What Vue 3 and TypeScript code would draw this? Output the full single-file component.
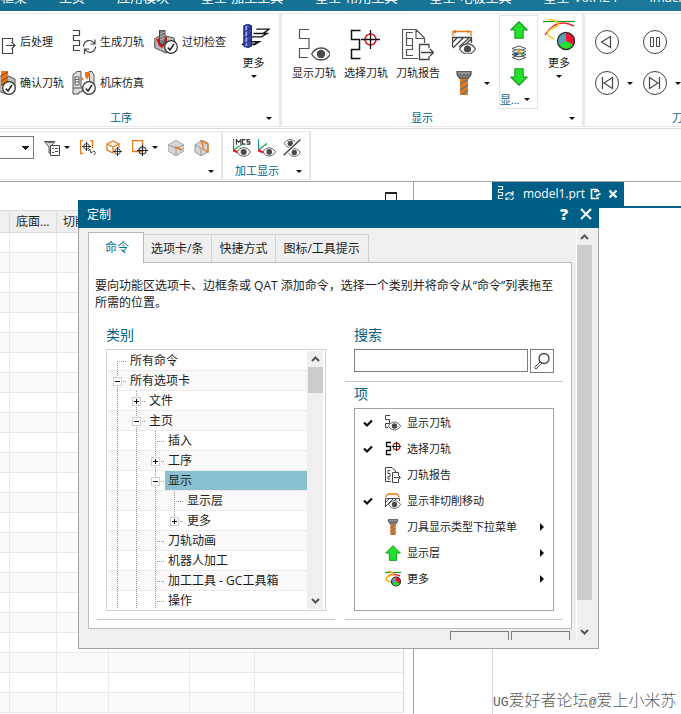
<script setup lang="ts">
import { ref } from 'vue'

interface TreeRow {
  label: string
  level: number
  node?: 'open' | 'closed'
  guides: string[]
  selected?: boolean
}

interface Item {
  label: string
  icon: string
  checked?: boolean
  more?: boolean
}

const menus = ['框架', '主页', '应用模块', '星空-加工工具', '星空-常用工具', '星空-电极工具', '星空-V6.F.24', 'imachining']

const operations = [
  { label: '后处理', icon: 'post' },
  { label: '生成刀轨', icon: 'generate' },
  { label: '过切检查', icon: 'gouge' },
  { label: '确认刀轨', icon: 'verify' },
  { label: '机床仿真', icon: 'machine' },
]

const displays = [
  { label: '显示刀轨', icon: 'path-eye' },
  { label: '选择刀轨', icon: 'path-pick' },
  { label: '刀轨报告', icon: 'report' },
]

const tabs = ['命令', '选项卡/条', '快捷方式', '图标/工具提示']
const activeTab = ref('命令')

const tree: TreeRow[] = [
  { label: '所有命令', level: 1, guides: ['start'] },
  { label: '所有选项卡', level: 1, node: 'open', guides: ['line'] },
  { label: '文件', level: 2, node: 'closed', guides: ['line', 'line'] },
  { label: '主页', level: 2, node: 'open', guides: ['line', 'line'] },
  { label: '插入', level: 3, guides: ['line', 'line', 'line'] },
  { label: '工序', level: 3, node: 'closed', guides: ['line', 'line', 'line'] },
  { label: '显示', level: 3, node: 'open', guides: ['line', 'line', 'line'], selected: true },
  { label: '显示层', level: 4, guides: ['line', 'line', 'line', 'line'] },
  { label: '更多', level: 4, node: 'closed', guides: ['line', 'line', 'line', 'end'] },
  { label: '刀轨动画', level: 3, guides: ['line', 'line', 'line'] },
  { label: '机器人加工', level: 3, guides: ['line', 'line', 'line'] },
  { label: '加工工具 - GC工具箱', level: 3, guides: ['line', 'line', 'line'] },
  { label: '操作', level: 3, guides: ['line', 'line', 'line'] },
]

const items: Item[] = [
  { label: '显示刀轨', icon: 's-path-eye', checked: true },
  { label: '选择刀轨', icon: 's-path-pick', checked: true },
  { label: '刀轨报告', icon: 's-report' },
  { label: '显示非切削移动', icon: 's-noncut', checked: true },
  { label: '刀具显示类型下拉菜单', icon: 'drill', more: true },
  { label: '显示层', icon: 'arrow-up', more: true },
  { label: '更多', icon: 's-curves', more: true },
]

const search = ref('')
const filter = ref('')
</script>

<template>
  <div class="app">
    <svg class="defs" aria-hidden="true">
      <symbol id="eye" viewBox="0 0 20 14">
        <path d="M.7 7C5-1 15-1 19.300 7C15 15 5 15 .7 7Z" fill="#fff" stroke="#4a4a4a" stroke-width="1.300" />
        <circle cx="10" cy="7" r="4.200" fill="#4a4a4a" />
      </symbol>
      <symbol id="tick" viewBox="0 0 14 14">
        <circle cx="7" cy="7" r="6.300" fill="#fff" stroke="#333" stroke-width="1.200" />
        <path d="M3.800 7.500L6 10L10 4" fill="none" stroke="#222" stroke-width="1.400" />
      </symbol>
      <symbol id="post" viewBox="0 0 24 24">
        <path d="M20.500 12V8.500H10.500V23.500H20.500V19M14 15.500H23M19.500 12L23 15.500L19.500 19" fill="none" stroke="#444" stroke-width="1.200" />
      </symbol>
      <symbol id="generate" viewBox="0 0 24 24">
        <path d="M1 .5H7.500V5.500H1.500V10.500H7.500V15.500H1.500V20.500H8" fill="none" stroke="#444" stroke-width="1.200" />
        <path d="M11.500 16.500C12 10 19 8.500 22.500 13.500M23 9.500V14H18.500M23.500 16.500C23 23 16 24 13 19.500M12.500 24V19H17" fill="none" stroke="#444" stroke-width="1.200" />
      </symbol>
      <symbol id="gouge" viewBox="0 0 24 24">
        <path d="M0 9L7 5L20 8L22 17L12 23L1 18Z" fill="#bbb" stroke="#555" />
        <path d="M2 9L13 7V13L8 18L5 16Z" fill="#d0141c" />
        <path d="M1 10V18L12 23V13" fill="none" stroke="#777" />
        <path d="M5.500 0H11V13L8 15L5.500 13Z" fill="#777" stroke="#444" />
        <path d="M6 4L11 2M6 7L11 5M6 10L11 8" stroke="#bbb" />
        <use href="#tick" x="10" y="10" width="14" height="14" />
      </symbol>
      <symbol id="verify" viewBox="0 0 24 24">
        <path d="M4 8L12 3L23 8V18L14 23L4 19Z" fill="#bbb" stroke="#555" />
        <path d="M9 0H16V14L12 16L9 14Z" fill="#e87817" />
        <path d="M9 5L16 1M9 10L16 6M9 14L16 10" stroke="#a64c08" stroke-width="1.200" />
        <use href="#tick" x="10" y="10" width="14" height="14" />
      </symbol>
      <symbol id="machine" viewBox="0 0 24 24">
        <path d="M1 4L5 .5H9V16H13V19H10V21H7V23H1Z" fill="#ddd" stroke="#555" />
        <path d="M17 .5H20L22 4V14H18Z" fill="#ddd" stroke="#555" />
        <path d="M3 6H7V14H3ZM3 8.500H7M3 11H7M1 17H11" fill="#fff" stroke="#555" />
        <path d="M9 6L12 8L9 10ZM13 1H17V5L15 9L13 5Z" fill="#e87817" />
        <use href="#tick" x="10" y="10" width="14" height="14" />
      </symbol>
      <symbol id="mill" viewBox="-2 -2 33 33">
        <path d="M17 8.500H30L24 13H14M30 8.500L23 13.500M14 13H28L22 16.500H12M12 21.500H18L15 24H2M12 21.500H20L14 25" fill="none" stroke="#111" stroke-width="1.400" />
        <path d="M4 5Q8 2 12 5V26Q8 29 4 26Z" fill="#3542a8" stroke="#1a2068" />
        <path d="M6.500 5V26" stroke="#96a0e8" stroke-width="2" />
        <path d="M4 12L12 7M4 18L12 13M4 24L12 19" stroke="#171d6b" />
      </symbol>
      <symbol id="path-eye" viewBox="0 0 32 32">
        <path d="M11 .5H1.500V9.500H11V19.500H1.500V28.500H10" fill="none" stroke="#555" stroke-width="1.200" />
        <use href="#eye" x="13" y="18" width="20" height="14" />
      </symbol>
      <symbol id="path-pick" viewBox="0 0 32 32">
        <path d="M10.500 1.500H1.500V10.500H9.500V20.500H1.500V29.500H10.500" fill="none" stroke="#111" stroke-width="1.500" />
        <circle cx="20.500" cy="10.500" r="5.500" fill="none" stroke="#e01b24" stroke-width="1.500" />
        <path d="M20.500 1V20M11 10.500H30" stroke="#111" stroke-width="1.300" />
      </symbol>
      <symbol id="report" viewBox="0 0 32 32">
        <path d="M16 29.500H.5V.5H14L22.500 9V14M14 1V9.500H22M11 3.500H4.500V9.500H10.500V16.500H4.500V9.500M10.500 16.500V20.500H4.500V26.500H11" fill="none" stroke="#555" stroke-width="1.200" />
        <path d="M27 19V15.500H17.500V30.500H27V27M19 23.500H31M28 20L31.500 23.500L28 27" fill="none" stroke="#444" stroke-width="1.300" />
      </symbol>
      <symbol id="noncut" viewBox="0 0 24 24">
        <path d="M.5 17V7.500H19.500V13M1 12L5 8M1 18L11 8M7 17L17 8M14 14L19 9" fill="none" stroke="#444" stroke-width="1.300" />
        <path d="M1 6V1.500H19V6M16 0V3M4 0L1.500 1.500L4 3" fill="none" stroke="#e87817" stroke-width="1.300" />
        <use href="#eye" x="7" y="13" width="17" height="12" />
      </symbol>
      <symbol id="drill" viewBox="0 0 24 24">
        <path d="M5 0H19V4L16 8H8L5 4Z" fill="#777" stroke="#444" />
        <path d="M8 8H16V24H8Z" fill="#e87817" />
        <path d="M8 13L16 8.500M8 19L16 14M9 24L16 19.500" stroke="#777" stroke-width="1.800" />
        <path d="M6 2H18" stroke="#aaa" />
      </symbol>
      <symbol id="arrow-up" viewBox="0 0 24 24">
        <path d="M12 1L23 12H17.500V23H6.500V12H1Z" fill="#22e02c" stroke="#169a1c" stroke-width="1.500" stroke-linejoin="round" />
      </symbol>
      <symbol id="layers" viewBox="0 0 16 16">
        <path d="M1 3.500L8 1L15 3.500L8 6ZM1 12.500L8 10L15 12.500L8 15Z" fill="#fff" stroke="#555" />
        <path d="M1 9.500L8 7L15 9.500L8 12Z" fill="#dfe9d8" stroke="#444" />
        <path d="M1 6.500L8 4L15 6.500L8 9Z" fill="#fff" stroke="#666" />
        <path d="M3 9L6 7L8 9L5 11Z" fill="#2b50a8" />
        <path d="M9 8L13 7L11 11Z" fill="#2da34a" />
        <circle cx="8" cy="6.500" r="1.800" fill="#f39c12" />
      </symbol>
      <symbol id="curves" viewBox="0 0 32 32">
        <path d="M0 2.500H32" stroke="#0f9a1e" stroke-width="1.200" />
        <path d="M2 16Q13-2 31 7" fill="none" stroke="#e8253b" stroke-width="1.400" />
        <path d="M5 0C16 2 19 6 10 9C3 12 2 16 11 20" fill="none" stroke="#f7c51e" stroke-width="1.500" />
        <circle cx="23" cy="22" r="8.500" fill="#5a9fb8" />
        <path d="M23 22V13.500A8.500 8.500 0 0 1 30.400 26.200Z" fill="#fa1433" />
        <path d="M23 22L30.400 26.200A8.500 8.500 0 0 1 15.600 26.200Z" fill="#22e02c" />
        <circle cx="23" cy="22" r="8.500" fill="none" stroke="#333" stroke-width="1.400" />
      </symbol>
      <symbol id="s-curves" viewBox="0 0 16 16">
        <path d="M0 1.500H16" stroke="#0f9a1e" stroke-width="1.200" />
        <path d="M3 5Q9 2 15 5" fill="none" stroke="#e8253b" stroke-width="1.400" />
        <path d="M3 .5Q9 1 8 4Q1 5 1 8.500Q3 11 7 11" fill="none" stroke="#f5b11e" stroke-width="1.500" />
        <circle cx="11" cy="10.500" r="4.500" fill="#5a9fb8" />
        <path d="M11 10.500V6A4.500 4.500 0 0 1 14.900 12.700Z" fill="#fa1433" />
        <path d="M11 10.500L14.900 12.700A4.500 4.500 0 0 1 7.100 12.700Z" fill="#22e02c" />
        <circle cx="11" cy="10.500" r="4.500" fill="none" stroke="#333" stroke-width="1.200" />
      </symbol>
      <symbol id="play-back" viewBox="0 0 24 24">
        <circle cx="12" cy="12" r="11.500" fill="#fff" stroke="#444" />
        <path d="M15.500 6.500V17.500L6.500 12Z" fill="none" stroke="#444" stroke-width="1.200" />
      </symbol>
      <symbol id="pause" viewBox="0 0 24 24">
        <circle cx="12" cy="12" r="11.500" fill="#fff" stroke="#444" />
        <path d="M7.500 7.500H10.500V16.500H7.500ZM13.500 7.500H16.500V16.500H13.500Z" fill="none" stroke="#444" />
      </symbol>
      <symbol id="first" viewBox="0 0 24 24">
        <circle cx="12" cy="12" r="11.500" fill="#fff" stroke="#444" />
        <path d="M17.500 6.500V17.500L9 12ZM7.500 6V18" fill="none" stroke="#444" stroke-width="1.200" />
      </symbol>
      <symbol id="last" viewBox="0 0 24 24">
        <circle cx="12" cy="12" r="11.500" fill="#fff" stroke="#444" />
        <path d="M6.500 6.500V17.500L15 12ZM16.500 6V18" fill="none" stroke="#444" stroke-width="1.200" />
      </symbol>
      <symbol id="funnel" viewBox="0 0 16 16">
        <path d="M.5 1.500H11L8 5V13H5V7ZM.5 1.500Q6 4 11 1.500" fill="#ddd" stroke="#555" />
        <path d="M6.500 5.500H15.500V15.500H6.500Z" fill="#fff" stroke="#444" />
        <path d="M8 8.500H10M8 12.500H10M11 8.500H14M11 11.500H14" stroke="#444" />
      </symbol>
      <symbol id="target" viewBox="0 0 10 10">
        <circle cx="5" cy="5" r="3.200" fill="none" stroke="#333" />
        <path d="M5 0V10M0 5H10" stroke="#222" />
      </symbol>
      <symbol id="bracket" viewBox="0 0 16 16">
        <path d="M3 .5H.5V13.500H3M10 .5H12.500V8" fill="none" stroke="#e87817" stroke-width="1.300" />
        <use href="#target" x="2" y="2" width="9" height="9" />
        <path d="M8 11L10 9L11 13L14 11Q17 12 14 15" fill="none" stroke="#444" />
      </symbol>
      <symbol id="cube-pick" viewBox="0 0 16 16">
        <path d="M1 4L7 1L13 4V10L7 13L1 10ZM1 4L7 7L13 4M7 7V13" fill="none" stroke="#e87817" stroke-width="1.300" />
        <circle cx="11.500" cy="11.500" r="4" fill="#fff" />
        <use href="#target" x="7" y="7" width="9" height="9" />
      </symbol>
      <symbol id="rect-pick" viewBox="0 0 16 16">
        <path d="M.5.5H10.500V11.500H.5Z" fill="none" stroke="#e87817" stroke-width="1.300" />
        <use href="#target" x="5" y="5" width="11" height="11" />
      </symbol>
      <symbol id="cube-edge" viewBox="0 0 16 16">
        <path d="M0 5L8 0L16 5V11L8 16L0 11Z" fill="#d5d5d5" stroke="#aaa" />
        <path d="M0 5L8 8V16M8 8L16 5" fill="none" stroke="#999" />
        <path d="M7 7L14 10" stroke="#e87817" stroke-width="1.600" />
      </symbol>
      <symbol id="cube-face" viewBox="0 0 16 16">
        <path d="M1 5L8 0L14 3V12L7 16L1 12Z" fill="#d5d5d5" stroke="#999" />
        <path d="M1 5L7 8V16" fill="none" stroke="#999" />
        <path d="M7 1L14 4V12L9 9V5L7 1Z" fill="none" stroke="#e87817" stroke-width="1.300" />
      </symbol>
      <symbol id="mcs" viewBox="0 0 16 16">
        <path d="M.5 0V10" stroke="#1890a8" /><path d="M0 10L8 5" stroke="#18a030" /><path d="M0 10L5 12" stroke="#e01b24" stroke-width="2" />
        <path d="M3 5V.5L5 3L7 .5V5M11 .5H8.500V4.500H11M15 .5H12.500V2.500H15V4.500H12" fill="none" stroke="#333" />
        <use href="#eye" x="3" y="7" width="13" height="9" />
      </symbol>
      <symbol id="axis-eye" viewBox="0 0 16 16">
        <path d="M.5 0V10" stroke="#1890a8" /><path d="M0 10L8 4" stroke="#18a030" /><path d="M0 10L5 12" stroke="#e01b24" stroke-width="2" />
        <use href="#eye" x="4" y="7" width="12" height="9" />
      </symbol>
      <symbol id="eye-off" viewBox="0 0 16 16">
        <use href="#eye" x="0" y="0" width="13" height="8" />
        <use href="#eye" x="4" y="8" width="12" height="8" />
        <path d="M15 1L1 14" stroke="#fff" stroke-width="3" />
        <path d="M15.500.5L.5 14.500" stroke="#444" stroke-width="1.300" />
      </symbol>
      <symbol id="s-path-eye" viewBox="0 0 16 16">
        <path d="M5 .5H.5V4.500H4.500V8.500H.5V12.500H3" fill="none" stroke="#444" />
        <use href="#eye" x="3" y="6" width="13" height="10" />
      </symbol>
      <symbol id="s-path-pick" viewBox="0 0 16 16">
        <path d="M6 1.500H1.500V5.500H5.500V9.500H1.500V13.500H6" fill="none" stroke="#111" stroke-width="1.300" />
        <circle cx="11.500" cy="5.500" r="3.300" fill="none" stroke="#d01018" stroke-width="1.200" />
        <path d="M11.500 1V10M7 5.500H16" stroke="#111" />
      </symbol>
      <symbol id="s-report" viewBox="0 0 16 16">
        <path d="M6 14.500H.5V.5H7L10.500 4V5M5 3.500H3V6.500H5V9.500H3V12H5" fill="none" stroke="#444" />
        <path d="M13.500 8V5.500H7.500V15.500H13.500V13M9 10.500H15.500M13 8L15.500 10.500L13 13" fill="none" stroke="#444" />
      </symbol>
      <symbol id="s-noncut" viewBox="0 0 16 16">
        <path d="M.5 14V5.500H14.500V8M1 9L4 6M1 13L8 6M9 8L11 6" fill="none" stroke="#444" />
        <path d="M.5 4L3 1H12L14.500 4" fill="none" stroke="#e87817" stroke-width="1.300" />
        <use href="#eye" x="3" y="7" width="13" height="9" />
      </symbol>
    </svg>

    <nav class="menu">
      <a v-for="m in menus" :key="m" href="#">{{ m }}</a>
    </nav>

    <div class="ribbon">
      <section class="group ops">
        <div class="group-body">
          <div class="op-grid">
            <button v-for="o in operations" :key="o.label" class="op" type="button">
              <svg class="i24"><use :href="'#' + o.icon" /></svg>{{ o.label }}
            </button>
          </div>
          <button class="large more" type="button">
            <svg class="i32"><use href="#mill" /></svg>更多<i class="caret"></i>
          </button>
        </div>
        <footer class="group-foot"><span>工序</span><button type="button" aria-label="工序选项"><i class="caret"></i></button></footer>
      </section>

      <section class="group view">
        <div class="group-body">
          <button v-for="d in displays" :key="d.label" class="large" type="button">
            <svg class="i32"><use :href="'#' + d.icon" /></svg>{{ d.label }}
          </button>
          <div class="stack">
            <button type="button" aria-label="显示非切削移动"><svg class="i24"><use href="#noncut" /></svg></button>
            <button type="button" aria-label="刀具显示类型"><svg class="i24"><use href="#drill" /></svg><i class="caret"></i></button>
          </div>
          <div class="gallery">
            <button type="button" aria-label="上一层"><svg class="i18"><use href="#arrow-up" /></svg></button>
            <button type="button" aria-label="层"><svg class="i16"><use href="#layers" /></svg></button>
            <button type="button" aria-label="下一层"><svg class="i18 flip"><use href="#arrow-up" /></svg></button>
            <button class="gallery-label" type="button"><span>显...</span><i class="caret"></i></button>
          </div>
          <button class="large more" type="button">
            <svg class="i32"><use href="#curves" /></svg>更多<i class="caret"></i>
          </button>
        </div>
        <footer class="group-foot"><span>显示</span><button type="button" aria-label="显示选项"><i class="caret"></i></button></footer>
      </section>

      <section class="group play">
        <div class="group-body play-grid">
          <button type="button" aria-label="后退"><svg class="i24"><use href="#play-back" /></svg></button>
          <button type="button" aria-label="暂停"><svg class="i24"><use href="#pause" /></svg></button>
          <button type="button" aria-label="第一步"><svg class="i24"><use href="#first" /></svg><i class="caret"></i></button>
          <button type="button" aria-label="最后一步"><svg class="i24"><use href="#last" /></svg><i class="caret"></i></button>
        </div>
        <footer class="group-foot"><span>刀轨动画</span></footer>
      </section>
    </div>

    <div class="tools">
      <section class="tool-group select-group">
        <div class="tool-row">
          <select v-model="filter" class="filter" aria-label="选择过滤器"><option value=""></option></select>
          <button type="button" aria-label="过滤"><svg class="i16"><use href="#funnel" /></svg><i class="caret"></i></button>
          <button type="button" aria-label="选择范围"><svg class="i16"><use href="#bracket" /></svg></button>
          <button type="button" aria-label="选择体"><svg class="i16"><use href="#cube-pick" /></svg></button>
          <button type="button" aria-label="矩形选择"><svg class="i16"><use href="#rect-pick" /></svg><i class="caret"></i></button>
          <button type="button" aria-label="边"><svg class="i16"><use href="#cube-edge" /></svg></button>
          <button type="button" aria-label="面"><svg class="i16"><use href="#cube-face" /></svg></button>
        </div>
        <footer class="group-foot"><span></span><button type="button" aria-label="选择选项"><i class="caret"></i></button></footer>
      </section>
      <section class="tool-group cam-group">
        <div class="tool-row">
          <button type="button" aria-label="显示 MCS"><svg class="i18"><use href="#mcs" /></svg></button>
          <button type="button" aria-label="显示坐标系"><svg class="i18"><use href="#axis-eye" /></svg></button>
          <button type="button" aria-label="隐藏"><svg class="i18"><use href="#eye-off" /></svg></button>
        </div>
        <footer class="group-foot"><span>加工显示</span><button type="button" aria-label="加工显示选项"><i class="caret"></i></button></footer>
      </section>
    </div>

    <main class="workspace">
      <section class="navigator">
        <header class="nav-head"><button class="maximize" type="button" aria-label="最大化"></button></header>
        <table class="grid">
          <colgroup><col class="c1" /><col class="c2" /><col class="c3" /><col class="c4" /><col class="c5" /><col /></colgroup>
          <thead><tr><th></th><th>底面...</th><th>切削</th><th></th><th></th><th></th></tr></thead>
          <tbody><tr v-for="r in 24" :key="r"><td v-for="c in 6" :key="c"></td></tr></tbody>
        </table>
      </section>
      <section class="viewport">
        <header class="file-bar">
          <div class="file-tab">
            <svg class="i18" viewBox="0 0 18 18"><path d="M1 1.500H5.500V4.500H1.500V7.500H5.500V10.500H1.500V13.500H6M8.500 11C9 7.500 14 6.500 16 9.500M16 6V10H12.500M16.500 12C16 15.500 11 16.500 9 13.500M9 17V13H12.500" fill="none" stroke="#e4eef3" stroke-width="1.200" /></svg>
            <span>model1.prt</span>
            <svg class="i12" viewBox="0 0 12 12"><path d="M8 9V10.500H1.500V1.500H7L9 4M4 3.500H7M6 8L10.500 5.500" fill="none" stroke="#fff" stroke-width="1.600" /></svg>
            <button type="button" aria-label="关闭 model1.prt"><svg class="i12" viewBox="0 0 12 12"><path d="M2.500 2.500L9.500 9.500M9.500 2.500L2.500 9.500" stroke="#fff" stroke-width="2.200" /></svg></button>
          </div>
        </header>
        <div class="canvas">
          <p class="watermark"><span>UG</span>爱好者论坛<span>@</span>爱上小米苏</p>
        </div>
      </section>
    </main>

    <div class="dialog" role="dialog" aria-labelledby="dialog-title">
      <header class="title-bar">
        <h1 id="dialog-title">定制</h1>
        <button type="button" aria-label="帮助" class="help">?</button>
        <button type="button" aria-label="关闭"><svg class="i12" viewBox="0 0 12 12"><path d="M1 1L11 11M11 1L1 11" stroke="#fff" stroke-width="2" /></svg></button>
      </header>
      <div class="dialog-body">
        <div class="dialog-main">
          <div class="tabs" role="tablist">
            <button v-for="t in tabs" :key="t" type="button" role="tab" :aria-selected="t === activeTab" :class="{ active: t === activeTab }" @click="activeTab = t">{{ t }}</button>
          </div>
          <div class="panel">
            <p class="intro">要向功能区选项卡、边框条或 QAT 添加命令，选择一个类别并将命令从“命令”列表拖至所需的位置。</p>
            <div class="columns">
              <section class="col categories">
                <h2>类别</h2>
                <div class="tree-box">
                  <ul class="tree" role="tree">
                    <li v-for="row in tree" :key="row.label + row.level" role="treeitem" :aria-level="row.level" :class="{ selected: row.selected }">
                      <span v-for="(g, i) in row.guides" :key="i" class="guide" :class="[g, { branch: i === row.level - 1 }]">
                        <button v-if="row.node && i === row.level - 1" type="button" class="node" :class="row.node" :aria-label="row.label"></button>
                      </span>
                      <span class="tree-label">{{ row.label }}</span>
                    </li>
                  </ul>
                  <div class="scroll">
                    <svg class="chev" viewBox="0 0 15 15"><path d="M4 9.500L7.500 6L11 9.500" /></svg>
                    <i class="thumb short"></i>
                    <svg class="chev" viewBox="0 0 15 15"><path d="M4 5.500L7.500 9L11 5.500" /></svg>
                  </div>
                </div>
              </section>
              <section class="col commands">
                <div class="search-block">
                  <h2><label for="search">搜索</label></h2>
                  <div class="search-row">
                    <input id="search" v-model="search" type="text" />
                    <button type="button" aria-label="搜索"><svg class="i18" viewBox="0 0 18 18"><circle cx="11" cy="6.500" r="5" fill="#fff" stroke="#444" stroke-width="1.300" /><path d="M7.500 9.500L1.500 15.500L3 17L9 11" fill="none" stroke="#444" /></svg></button>
                  </div>
                </div>
                <div class="item-block">
                  <h2>项</h2>
                  <ul class="items">
                    <li v-for="it in items" :key="it.label">
                      <span class="check"><svg v-if="it.checked" class="i10" viewBox="0 0 10 10"><path d="M1 4.500L4 7.500L9 2.500" fill="none" stroke="#111" stroke-width="2.200" /></svg></span>
                      <svg class="i16"><use :href="'#' + it.icon" /></svg>
                      <span class="item-label">{{ it.label }}</span>
                      <i v-if="it.more" class="arrow"></i>
                    </li>
                  </ul>
                </div>
              </section>
            </div>
          </div>
          <div class="dialog-actions"><button type="button" aria-label="键盘"></button><button type="button" aria-label="关闭对话框"></button></div>
        </div>
        <div class="scroll outer">
          <svg class="chev" viewBox="0 0 15 15"><path d="M4 9.500L7.500 6L11 9.500" /></svg>
          <i class="thumb long"></i>
          <svg class="chev" viewBox="0 0 15 15"><path d="M4 5.500L7.500 9L11 5.500" /></svg>
        </div>
      </div>
    </div>
  </div>
</template>

<style>
body {
  margin: 0;
  overflow: hidden;
}
</style>

<style scoped>
.app {
  position: relative;
  display: flex;
  flex-direction: column;
  height: 100vh;
  overflow: hidden;
  background: #fff;
  color: #1c1c1c;
  font: 11px/16px "Open Sans", "Noto Sans CJK SC", sans-serif;
}
.app * {
  box-sizing: border-box;
}
.defs {
  position: absolute;
  width: 0;
  height: 0;
}
button {
  display: flex;
  align-items: center;
  padding: 0;
  border: 0;
  background: none;
  color: inherit;
  font: inherit;
  white-space: nowrap;
}
h1, h2, p, ul {
  margin: 0;
  padding: 0;
  font-weight: normal;
  list-style: none;
}
svg {
  display: block;
  flex: none;
}
.i10 { width: 10px; height: 10px; }
.i12 { width: 12px; height: 12px; }
.i16 { width: 16px; height: 16px; }
.i18 { width: 18px; height: 18px; }
.i24 { width: 24px; height: 24px; }
.i32 { width: 32px; height: 32px; }
.flip {
  transform: rotate(180deg);
}
.caret {
  flex: none;
  border: 3px solid transparent;
  border-top-color: #111;
  border-bottom: 0;
}

.menu {
  display: flex;
  flex: none;
  align-items: flex-end;
  gap: 32px;
  height: 11px;
  padding: 0 0 4px 1px;
  overflow: hidden;
  background: linear-gradient(90deg, #126e91, #1b7899);
}
.menu a {
  flex: none;
  color: #fff;
  font-size: 13px;
  line-height: 20px;
  text-decoration: none;
}

.ribbon {
  display: flex;
  flex: none;
  height: 118px;
  padding-top: 2px;
  border-bottom: 1px solid #d9d9d9;
  overflow: hidden;
}
.group {
  display: flex;
  flex: none;
  flex-direction: column;
  height: 114px;
  border: solid #e8e8e8;
  border-width: 1px 2px 1px 1px;
}
.ops {
  width: 299px;
  margin-left: -18px;
}
.view {
  width: 303px;
}
.play {
  flex: 1 0 150px;
}
.group-body {
  display: flex;
  flex: 1;
}
.group-foot {
  display: flex;
  flex: none;
  align-items: center;
  height: 16px;
  color: #00628b;
}
.group-foot span {
  flex: 1;
  text-align: center;
}
.group-foot button {
  justify-content: center;
  width: 20px;
  height: 16px;
}
.op-grid {
  display: grid;
  grid-template-columns: 80px 82px 74px;
  grid-auto-rows: 24px;
  row-gap: 17px;
  padding: 16px 0 0 9px;
}
.op {
  gap: 4px;
}
.large {
  flex-direction: column;
  width: 52px;
  padding-top: 15px;
  gap: 4px;
}
.large.more {
  width: 42px;
  padding-top: 5px;
  gap: 4px;
}
.ops .more {
  width: 60px;
}
.view .group-body {
  padding-left: 6px;
}
.stack {
  display: grid;
  grid-auto-rows: 24px;
  row-gap: 17px;
  width: 55px;
  padding: 16px 0 0 8px;
}
.stack button {
  gap: 8px;
}
.gallery {
  display: flex;
  flex-direction: column;
  align-items: center;
  justify-content: space-between;
  width: 39px;
  height: 94px;
  margin-top: 1px;
  padding-top: 5px;
  border: 1px solid #e2e2e2;
}
.gallery-label {
  align-self: stretch;
  gap: 4px;
  color: #00628b;
}
.play-grid {
  display: grid;
  grid-template-columns: 48px 48px;
  grid-auto-rows: 24px;
  row-gap: 17px;
  padding: 16px 0 0 10px;
}
.play-grid button {
  gap: 8px;
}
.play .group-foot span {
  padding-left: 87px;
  text-align: left;
}

.tools {
  display: flex;
  flex: none;
  height: 53px;
  padding-top: 2px;
  border-bottom: 1px solid #a3a3a3;
}
.tool-group {
  display: flex;
  flex-direction: column;
  justify-content: space-between;
  height: 49px;
  border: solid #e6e6e6;
  border-width: 1px 2px 1px 0;
}
.select-group {
  width: 223px;
}
.cam-group {
  width: 88px;
}
.tool-row {
  display: flex;
  align-items: center;
  gap: 10px;
  height: 32px;
}
.tool-row button {
  gap: 4px;
}
.cam-group .tool-row {
  gap: 7px;
  padding-left: 10px;
}
.cam-group .group-foot span {
  padding-left: 2px;
}
.filter {
  width: 34px;
  height: 23px;
  border: 1px solid #7d7d7d;
  border-left: 0;
  border-radius: 0;
  background: linear-gradient(#111, #111) 22px 9px / 7px 1px no-repeat, linear-gradient(#111, #111) 23px 10px / 5px 1px no-repeat, linear-gradient(#111, #111) 24px 11px / 3px 1px no-repeat, linear-gradient(#111, #111) 25px 12px / 1px 1px no-repeat, #fff;
  appearance: none;
}

.workspace {
  display: flex;
  flex: 1;
  min-height: 0;
}
.navigator {
  flex: none;
  width: 414px;
  padding-right: 9px;
  border-right: 1px solid #a3a3a3;
  overflow: hidden;
}
.nav-head {
  display: flex;
  justify-content: flex-end;
  height: 28px;
  padding: 10px 7px 0 0;
}
.maximize {
  width: 12px;
  height: 11px;
  border: 1px solid #222;
  border-top-width: 2px;
}
.grid {
  width: 100%;
  border-collapse: separate;
  border-spacing: 0;
  border-right: 1px solid #d9d9d9;
  table-layout: fixed;
}
.c1 { width: 10px; }
.c2 { width: 47px; }
.c3 { width: 52px; }
.c4 { width: 81px; }
.c5 { width: 65px; }
.grid th {
  height: 23px;
  padding: 0 0 0 6px;
  border: solid #dcdcdc;
  border-width: 1px 1px 1px 0;
  background: #efefef;
  font-size: 12px;
  font-weight: normal;
  text-align: left;
  white-space: nowrap;
  overflow: hidden;
}
.grid td {
  height: 20px;
  padding: 0;
  border: solid #e9e9e9;
  border-width: 0 1px 1px 0;
}
.grid td:last-child,
.grid th:last-child {
  border-right: 0;
}
.grid tbody tr:nth-child(even) {
  background: #fafafa;
}
.viewport {
  display: flex;
  flex: 1;
  flex-direction: column;
  min-width: 0;
  padding-left: 78px;
}
.file-bar {
  display: flex;
  flex: none;
  height: 26px;
  border-bottom: 2px solid #005f87;
}
.file-tab {
  display: flex;
  align-items: center;
  gap: 5px;
  padding: 0 5px;
  background: #005f87;
  color: #fff;
  font-size: 12px;
}
.file-tab .i18 {
  margin-right: 3px;
}
.canvas {
  display: flex;
  flex: 1;
  align-items: flex-end;
  border-left: 1px solid #d9d9d9;
}
.watermark {
  color: #5c5c5c;
  font: 300 16px/22px "Noto Sans CJK SC", sans-serif;
  white-space: nowrap;
}
.watermark span {
  font: 13px/22px "Liberation Mono", monospace;
}

.dialog {
  position: absolute;
  top: 200px;
  left: 78px;
  width: 521px;
  border: 1px solid #a3a3a3;
  border-top: 0;
  background: #efefef;
  font-size: 12px;
}
.title-bar {
  display: flex;
  align-items: center;
  gap: 12px;
  height: 28px;
  margin: 0 -1px;
  padding: 0 7px 0 9px;
  background: #005f87;
  color: #fff;
}
.title-bar h1 {
  flex: 1;
  padding-top: 2px;
  font-size: 12px;
}
.help {
  font-size: 16px;
  font-weight: 800;
}
.dialog-body {
  display: flex;
  padding: 4px 6px 8px 9px;
}
.dialog-main {
  flex: 1;
  min-width: 0;
}
.tabs {
  display: flex;
  align-items: flex-start;
  height: 30px;
}
.tabs button {
  height: 28px;
  margin: 2px 0 0 -1px;
  padding: 0 8px 0 7px;
  border: 1px solid #d2d2d2;
  border-bottom: 0;
}
.tabs button.active {
  position: relative;
  height: 31px;
  margin: 0;
  padding: 0 14px 0 16px;
  border-color: #b9b9b9;
  background: #fff;
  color: #00718f;
}
.panel {
  margin-right: 4px;
  padding: 14px 8px 8px;
  border: 1px solid #bdbdbd;
  background: #fff;
}
.intro {
  margin: 0 -2px;
  padding-bottom: 14px;
  line-height: 17px;
}
.columns {
  display: grid;
  grid-template-columns: 238fr 218fr;
  gap: 10px;
}
.col {
  display: flex;
  flex-direction: column;
}
.col h2 {
  height: 24px;
  color: #00628b;
  font-size: 14px;
  line-height: 20px;
}
.categories {
  padding: 0 9px 8px;
  border-bottom: 1px solid #c6c6c6;
}
.tree-box {
  display: flex;
  height: 262px;
  padding: 1px 2px 1px 1px;
  border: 1px solid #d0d0d0;
}
.tree {
  flex: 1;
  min-width: 0;
  overflow: hidden;
}
.tree li {
  display: flex;
  height: 20px;
  border-bottom: 1px solid #ececec;
}
.tree li:nth-child(even) {
  background: #f9f9f9;
}
.guide {
  display: flex;
  flex: none;
  align-items: center;
  justify-content: center;
  width: 19px;
  height: 20px;
  background: repeating-linear-gradient(#999 0 1px, transparent 1px 2px) 9px 0 / 1px 100% no-repeat;
}
.guide.branch {
  background: repeating-linear-gradient(#999 0 1px, transparent 1px 2px) 9px 0 / 1px 100% no-repeat, repeating-linear-gradient(90deg, #999 0 1px, transparent 1px 2px) 9px 10px / 9px 1px no-repeat;
}
.guide.start {
  background: repeating-linear-gradient(#999 0 1px, transparent 1px 2px) 9px 10px / 1px 10px no-repeat, repeating-linear-gradient(90deg, #999 0 1px, transparent 1px 2px) 9px 10px / 9px 1px no-repeat;
}
.guide.end {
  background: repeating-linear-gradient(#999 0 1px, transparent 1px 2px) 9px 0 / 1px 10px no-repeat, repeating-linear-gradient(90deg, #999 0 1px, transparent 1px 2px) 9px 10px / 9px 1px no-repeat;
}
.node {
  width: 9px;
  height: 9px;
  border: 1px solid #d0d0d0;
  background: linear-gradient(#111, #111) center / 5px 1px no-repeat, #fff;
}
.node.closed {
  background: linear-gradient(#111, #111) center / 5px 1px no-repeat, linear-gradient(#111, #111) center / 1px 5px no-repeat, #fff;
}
.tree-label {
  flex: 1;
  padding-left: 3px;
  line-height: 19px;
  white-space: nowrap;
}
.selected .tree-label {
  background: #8ac1d1;
}
.scroll {
  display: flex;
  flex: none;
  flex-direction: column;
  align-items: center;
  justify-content: space-between;
  width: 16px;
  background: #efefef;
}
.chev {
  width: 15px;
  height: 16px;
  fill: none;
  stroke: #555;
  stroke-width: 2;
}
.thumb {
  width: 15px;
  background: #cbcbcb;
}
.short {
  height: 26px;
  margin-bottom: auto;
}
.outer {
  width: 16px;
  margin-top: -3px;
  border-left: 1px solid #fff;
}
.outer .thumb {
  flex: 1;
}
.outer .chev:last-child {
  margin-top: 24px;
}
.search-block {
  padding: 0 9px 8px;
  border-bottom: 1px solid #c6c6c6;
}
.search-row {
  display: flex;
  gap: 2px;
}
.search-row input {
  flex: 1;
  min-width: 0;
  height: 23px;
  padding: 0 4px;
  border: 1px solid #7d7d7d;
  font: inherit;
}
.search-row button {
  justify-content: center;
  width: 24px;
  height: 24px;
  border: 1px solid #7d7d7d;
}
.item-block {
  display: flex;
  flex: 1;
  flex-direction: column;
  padding: 2px 9px 8px;
  border-bottom: 1px solid #c6c6c6;
}
.items {
  flex: 1;
  padding: 1px 9px 0 8px;
  border: 1px solid #a3a3a3;
  font-size: 11px;
}
.items li {
  display: flex;
  align-items: center;
  height: 26px;
}
.check {
  width: 22px;
}
.item-label {
  flex: 1;
  padding-left: 6px;
}
.arrow {
  border: 4px solid transparent;
  border-right: 0;
  border-left-color: #111;
}
.dialog-actions {
  display: flex;
  justify-content: flex-end;
  gap: 2px;
  height: 11px;
  padding: 2px 6px 0 0;
}
.dialog-actions button {
  width: 59px;
  height: 9px;
  border: 1px solid #7d7d7d;
  border-bottom: 0;
}
</style>
